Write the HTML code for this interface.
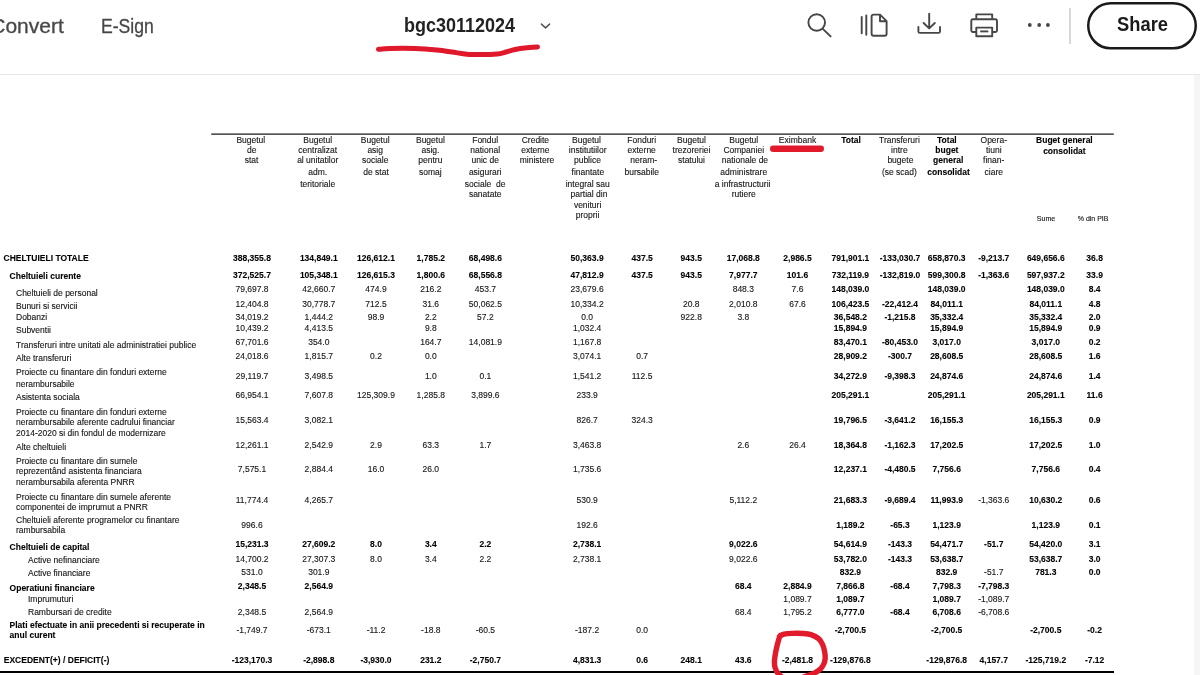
<!DOCTYPE html>
<html lang="ro">
<head>
<meta charset="utf-8">
<title>bgc30112024</title>
<style>
html,body{margin:0;padding:0;background:#fff;}
body{width:1200px;height:675px;overflow:hidden;position:relative;font-family:"Liberation Sans",Arial,Helvetica,sans-serif;}
#topbar{position:absolute;left:0;top:0;width:1200px;height:74px;background:#fff;border-bottom:1px solid #e6e6e6;box-sizing:content-box;}
#strip{position:absolute;left:1194px;top:75px;width:6px;height:600px;background:#f5f5f5;}
.nav{position:absolute;font-size:20.5px;line-height:24px;color:#464646;white-space:nowrap;-webkit-text-stroke:0.3px #464646;}
#convert{right:1136.3px;top:14px;transform:scaleX(1.025);transform-origin:100% 50%;}
#esign{left:101.1px;top:14px;transform:scaleX(0.858);transform-origin:0 50%;}
#title{position:absolute;left:404.2px;top:13.2px;font-size:20.5px;line-height:24px;font-weight:700;color:#222;white-space:nowrap;transform:scaleX(0.877);transform-origin:0 50%;}
#share{position:absolute;left:0;top:0;}
#share span{position:absolute;left:1116.5px;top:12.45px;font-size:20.8px;line-height:24px;font-weight:700;color:#1a1a1a;transform:scaleX(0.882);transform-origin:0 50%;white-space:nowrap;}
#vsep{position:absolute;left:1069px;top:8px;width:1.5px;height:36px;background:#d8d8d8;}
svg{position:absolute;left:0;top:0;overflow:visible;}
.t{position:absolute;font-size:8.5px;line-height:10px;color:#151515;white-space:nowrap;-webkit-text-stroke:0.12px #151515;}
.b{font-weight:700;color:#000;-webkit-text-stroke:0.1px #000;}
.hl{position:absolute;background:#1a1a1a;}
#tbl{position:absolute;left:0;top:0;width:1200px;height:675px;will-change:opacity;}
#topbar{will-change:opacity;}
</style>
</head>
<body>
<div id="topbar">
  <span class="nav" id="convert">Convert</span>
  <span class="nav" id="esign">E-Sign</span>
  <span id="title">bgc30112024</span>
  <div id="vsep"></div>
  <div id="share"><span>Share</span></div>
</div>
<div id="strip"></div>

<div class="hl" style="left:0;top:671.1px;width:1114px;height:2.2px;background:#000;"></div>
<div id="tbl">
<span class="t" style="top:135.15px;left:190.80px;width:120px;text-align:center;">Bugetul</span>
<span class="t" style="top:145.45px;left:191.80px;width:120px;text-align:center;">de</span>
<span class="t" style="top:155.35px;left:191.50px;width:120px;text-align:center;">stat</span>
<span class="t" style="top:135.15px;left:257.70px;width:120px;text-align:center;">Bugetul</span>
<span class="t" style="top:145.45px;left:257.70px;width:120px;text-align:center;">centralizat</span>
<span class="t" style="top:155.35px;left:257.70px;width:120px;text-align:center;">al unitatilor</span>
<span class="t" style="top:166.75px;left:257.70px;width:120px;text-align:center;">adm.</span>
<span class="t" style="top:179.15px;left:257.70px;width:120px;text-align:center;">teritoriale</span>
<span class="t" style="top:135.15px;left:315.20px;width:120px;text-align:center;">Bugetul</span>
<span class="t" style="top:145.45px;left:315.20px;width:120px;text-align:center;">asig</span>
<span class="t" style="top:155.35px;left:315.20px;width:120px;text-align:center;">sociale</span>
<span class="t" style="top:166.75px;left:316.00px;width:120px;text-align:center;">de stat</span>
<span class="t" style="top:135.15px;left:370.40px;width:120px;text-align:center;">Bugetul</span>
<span class="t" style="top:145.45px;left:370.40px;width:120px;text-align:center;">asig.</span>
<span class="t" style="top:155.35px;left:370.40px;width:120px;text-align:center;">pentru</span>
<span class="t" style="top:166.75px;left:370.40px;width:120px;text-align:center;">somaj</span>
<span class="t" style="top:135.15px;left:425.20px;width:120px;text-align:center;">Fondul</span>
<span class="t" style="top:145.45px;left:425.20px;width:120px;text-align:center;">national</span>
<span class="t" style="top:155.35px;left:425.20px;width:120px;text-align:center;">unic de</span>
<span class="t" style="top:166.75px;left:425.20px;width:120px;text-align:center;">asigurari</span>
<span class="t" style="top:179.15px;left:425.20px;width:120px;text-align:center;">sociale&nbsp; de</span>
<span class="t" style="top:189.45px;left:425.20px;width:120px;text-align:center;">sanatate</span>
<span class="t" style="top:135.15px;left:475.40px;width:120px;text-align:center;">Credite</span>
<span class="t" style="top:145.45px;left:475.40px;width:120px;text-align:center;">externe</span>
<span class="t" style="top:155.35px;left:477.00px;width:120px;text-align:center;">ministere</span>
<span class="t" style="top:135.15px;left:526.50px;width:120px;text-align:center;">Bugetul</span>
<span class="t" style="top:145.45px;left:527.70px;width:120px;text-align:center;">institutiilor</span>
<span class="t" style="top:155.35px;left:527.40px;width:120px;text-align:center;">publice</span>
<span class="t" style="top:166.75px;left:527.90px;width:120px;text-align:center;">finantate</span>
<span class="t" style="top:179.15px;left:527.70px;width:120px;text-align:center;">integral sau</span>
<span class="t" style="top:189.45px;left:529.00px;width:120px;text-align:center;">partial din</span>
<span class="t" style="top:199.85px;left:527.60px;width:120px;text-align:center;">venituri</span>
<span class="t" style="top:210.25px;left:527.50px;width:120px;text-align:center;">proprii</span>
<span class="t" style="top:135.15px;left:581.70px;width:120px;text-align:center;">Fonduri</span>
<span class="t" style="top:145.45px;left:581.70px;width:120px;text-align:center;">externe</span>
<span class="t" style="top:155.35px;left:583.70px;width:120px;text-align:center;">neram-</span>
<span class="t" style="top:166.75px;left:581.70px;width:120px;text-align:center;">bursabile</span>
<span class="t" style="top:135.15px;left:631.50px;width:120px;text-align:center;">Bugetul</span>
<span class="t" style="top:145.45px;left:631.50px;width:120px;text-align:center;">trezoreriei</span>
<span class="t" style="top:155.35px;left:631.50px;width:120px;text-align:center;">statului</span>
<span class="t" style="top:135.15px;left:683.75px;width:120px;text-align:center;">Bugetul</span>
<span class="t" style="top:145.45px;left:683.75px;width:120px;text-align:center;">Companiei</span>
<span class="t" style="top:155.35px;left:684.95px;width:120px;text-align:center;">nationale de</span>
<span class="t" style="top:166.75px;left:683.75px;width:120px;text-align:center;">administrare</span>
<span class="t" style="top:179.15px;left:682.55px;width:120px;text-align:center;">a infrastructurii</span>
<span class="t" style="top:189.45px;left:683.75px;width:120px;text-align:center;">rutiere</span>
<span class="t" style="top:135.15px;left:737.50px;width:120px;text-align:center;">Eximbank</span>
<span class="t b" style="top:135.15px;left:791.00px;width:120px;text-align:center;">Total</span>
<span class="t" style="top:135.15px;left:839.40px;width:120px;text-align:center;">Transferuri</span>
<span class="t" style="top:145.45px;left:839.40px;width:120px;text-align:center;">intre</span>
<span class="t" style="top:155.35px;left:840.40px;width:120px;text-align:center;">bugete</span>
<span class="t" style="top:166.75px;left:839.40px;width:120px;text-align:center;">(se scad)</span>
<span class="t b" style="top:135.15px;left:886.90px;width:120px;text-align:center;">Total</span>
<span class="t b" style="top:145.45px;left:886.90px;width:120px;text-align:center;">buget</span>
<span class="t b" style="top:155.35px;left:888.20px;width:120px;text-align:center;">general</span>
<span class="t b" style="top:166.75px;left:888.60px;width:120px;text-align:center;">consolidat</span>
<span class="t" style="top:135.15px;left:933.75px;width:120px;text-align:center;">Opera-</span>
<span class="t" style="top:145.45px;left:933.75px;width:120px;text-align:center;">tiuni</span>
<span class="t" style="top:155.35px;left:933.75px;width:120px;text-align:center;">finan-</span>
<span class="t" style="top:166.75px;left:933.75px;width:120px;text-align:center;">ciare</span>
<span class="t b" style="top:135.15px;left:1004.40px;width:120px;text-align:center;">Buget general</span>
<span class="t b" style="top:145.85px;left:1004.40px;width:120px;text-align:center;">consolidat</span>
<span class="t" style="top:214.14px;left:986.00px;width:120px;text-align:center;font-size:7.1px;">Sume</span>
<span class="t" style="top:214.17px;left:1033.10px;width:120px;text-align:center;font-size:7.0px;">% din PIB</span>
<span class="t b" style="top:253.05px;left:3.60px;">CHELTUIELI TOTALE</span>
<span class="t b" style="top:252.75px;left:192.00px;width:120px;text-align:center;">388,355.8</span>
<span class="t b" style="top:252.75px;left:258.80px;width:120px;text-align:center;">134,849.1</span>
<span class="t b" style="top:252.75px;left:316.00px;width:120px;text-align:center;">126,612.1</span>
<span class="t b" style="top:252.75px;left:370.80px;width:120px;text-align:center;">1,785.2</span>
<span class="t b" style="top:252.75px;left:425.40px;width:120px;text-align:center;">68,498.6</span>
<span class="t b" style="top:252.75px;left:527.10px;width:120px;text-align:center;">50,363.9</span>
<span class="t b" style="top:252.75px;left:582.10px;width:120px;text-align:center;">437.5</span>
<span class="t b" style="top:252.75px;left:631.25px;width:120px;text-align:center;">943.5</span>
<span class="t b" style="top:252.75px;left:683.30px;width:120px;text-align:center;">17,068.8</span>
<span class="t b" style="top:252.75px;left:737.50px;width:120px;text-align:center;">2,986.5</span>
<span class="t b" style="top:252.75px;left:790.40px;width:120px;text-align:center;">791,901.1</span>
<span class="t b" style="top:252.75px;left:840.00px;width:120px;text-align:center;">-133,030.7</span>
<span class="t b" style="top:252.75px;left:886.70px;width:120px;text-align:center;">658,870.3</span>
<span class="t b" style="top:252.75px;left:933.75px;width:120px;text-align:center;">-9,213.7</span>
<span class="t b" style="top:252.75px;left:985.80px;width:120px;text-align:center;">649,656.6</span>
<span class="t b" style="top:252.75px;left:1034.60px;width:120px;text-align:center;">36.8</span>
<span class="t b" style="top:271.05px;left:9.60px;">Cheltuieli curente</span>
<span class="t b" style="top:270.25px;left:192.00px;width:120px;text-align:center;">372,525.7</span>
<span class="t b" style="top:270.25px;left:258.80px;width:120px;text-align:center;">105,348.1</span>
<span class="t b" style="top:270.25px;left:316.00px;width:120px;text-align:center;">126,615.3</span>
<span class="t b" style="top:270.25px;left:370.80px;width:120px;text-align:center;">1,800.6</span>
<span class="t b" style="top:270.25px;left:425.40px;width:120px;text-align:center;">68,556.8</span>
<span class="t b" style="top:270.25px;left:527.10px;width:120px;text-align:center;">47,812.9</span>
<span class="t b" style="top:270.25px;left:582.10px;width:120px;text-align:center;">437.5</span>
<span class="t b" style="top:270.25px;left:631.25px;width:120px;text-align:center;">943.5</span>
<span class="t b" style="top:270.25px;left:683.30px;width:120px;text-align:center;">7,977.7</span>
<span class="t b" style="top:270.25px;left:737.50px;width:120px;text-align:center;">101.6</span>
<span class="t b" style="top:270.25px;left:790.40px;width:120px;text-align:center;">732,119.9</span>
<span class="t b" style="top:270.25px;left:840.00px;width:120px;text-align:center;">-132,819.0</span>
<span class="t b" style="top:270.25px;left:886.70px;width:120px;text-align:center;">599,300.8</span>
<span class="t b" style="top:270.25px;left:933.75px;width:120px;text-align:center;">-1,363.6</span>
<span class="t b" style="top:270.25px;left:985.80px;width:120px;text-align:center;">597,937.2</span>
<span class="t b" style="top:270.25px;left:1034.60px;width:120px;text-align:center;">33.9</span>
<span class="t" style="top:287.85px;left:16.00px;">Cheltuieli de personal</span>
<span class="t" style="top:284.15px;left:192.00px;width:120px;text-align:center;">79,697.8</span>
<span class="t" style="top:284.15px;left:258.80px;width:120px;text-align:center;">42,660.7</span>
<span class="t" style="top:284.15px;left:316.00px;width:120px;text-align:center;">474.9</span>
<span class="t" style="top:284.15px;left:370.80px;width:120px;text-align:center;">216.2</span>
<span class="t" style="top:284.15px;left:425.40px;width:120px;text-align:center;">453.7</span>
<span class="t" style="top:284.15px;left:527.10px;width:120px;text-align:center;">23,679.6</span>
<span class="t" style="top:284.15px;left:683.30px;width:120px;text-align:center;">848.3</span>
<span class="t" style="top:284.15px;left:737.50px;width:120px;text-align:center;">7.6</span>
<span class="t b" style="top:284.15px;left:790.40px;width:120px;text-align:center;">148,039.0</span>
<span class="t b" style="top:284.15px;left:886.70px;width:120px;text-align:center;">148,039.0</span>
<span class="t b" style="top:284.15px;left:985.80px;width:120px;text-align:center;">148,039.0</span>
<span class="t b" style="top:284.15px;left:1034.60px;width:120px;text-align:center;">8.4</span>
<span class="t" style="top:300.65px;left:16.00px;">Bunuri si servicii</span>
<span class="t" style="top:298.75px;left:192.00px;width:120px;text-align:center;">12,404.8</span>
<span class="t" style="top:298.75px;left:258.80px;width:120px;text-align:center;">30,778.7</span>
<span class="t" style="top:298.75px;left:316.00px;width:120px;text-align:center;">712.5</span>
<span class="t" style="top:298.75px;left:370.80px;width:120px;text-align:center;">31.6</span>
<span class="t" style="top:298.75px;left:425.40px;width:120px;text-align:center;">50,062.5</span>
<span class="t" style="top:298.75px;left:527.10px;width:120px;text-align:center;">10,334.2</span>
<span class="t" style="top:298.75px;left:631.25px;width:120px;text-align:center;">20.8</span>
<span class="t" style="top:298.75px;left:683.30px;width:120px;text-align:center;">2,010.8</span>
<span class="t" style="top:298.75px;left:737.50px;width:120px;text-align:center;">67.6</span>
<span class="t b" style="top:298.75px;left:790.40px;width:120px;text-align:center;">106,423.5</span>
<span class="t b" style="top:298.75px;left:840.00px;width:120px;text-align:center;">-22,412.4</span>
<span class="t b" style="top:298.75px;left:886.70px;width:120px;text-align:center;">84,011.1</span>
<span class="t b" style="top:298.75px;left:985.80px;width:120px;text-align:center;">84,011.1</span>
<span class="t b" style="top:298.75px;left:1034.60px;width:120px;text-align:center;">4.8</span>
<span class="t" style="top:311.65px;left:16.00px;">Dobanzi</span>
<span class="t" style="top:311.75px;left:192.00px;width:120px;text-align:center;">34,019.2</span>
<span class="t" style="top:311.75px;left:258.80px;width:120px;text-align:center;">1,444.2</span>
<span class="t" style="top:311.75px;left:316.00px;width:120px;text-align:center;">98.9</span>
<span class="t" style="top:311.75px;left:370.80px;width:120px;text-align:center;">2.2</span>
<span class="t" style="top:311.75px;left:425.40px;width:120px;text-align:center;">57.2</span>
<span class="t" style="top:311.75px;left:527.10px;width:120px;text-align:center;">0.0</span>
<span class="t" style="top:311.75px;left:631.25px;width:120px;text-align:center;">922.8</span>
<span class="t" style="top:311.75px;left:683.30px;width:120px;text-align:center;">3.8</span>
<span class="t b" style="top:311.75px;left:790.40px;width:120px;text-align:center;">36,548.2</span>
<span class="t b" style="top:311.75px;left:840.00px;width:120px;text-align:center;">-1,215.8</span>
<span class="t b" style="top:311.75px;left:886.70px;width:120px;text-align:center;">35,332.4</span>
<span class="t b" style="top:311.75px;left:985.80px;width:120px;text-align:center;">35,332.4</span>
<span class="t b" style="top:311.75px;left:1034.60px;width:120px;text-align:center;">2.0</span>
<span class="t" style="top:325.05px;left:16.00px;">Subventii</span>
<span class="t" style="top:322.55px;left:192.00px;width:120px;text-align:center;">10,439.2</span>
<span class="t" style="top:322.55px;left:258.80px;width:120px;text-align:center;">4,413.5</span>
<span class="t" style="top:322.55px;left:370.80px;width:120px;text-align:center;">9.8</span>
<span class="t" style="top:322.55px;left:527.10px;width:120px;text-align:center;">1,032.4</span>
<span class="t b" style="top:322.55px;left:790.40px;width:120px;text-align:center;">15,894.9</span>
<span class="t b" style="top:322.55px;left:886.70px;width:120px;text-align:center;">15,894.9</span>
<span class="t b" style="top:322.55px;left:985.80px;width:120px;text-align:center;">15,894.9</span>
<span class="t b" style="top:322.55px;left:1034.60px;width:120px;text-align:center;">0.9</span>
<span class="t" style="top:340.45px;left:16.00px;">Transferuri intre unitati ale administratiei publice</span>
<span class="t" style="top:337.10px;left:192.00px;width:120px;text-align:center;">67,701.6</span>
<span class="t" style="top:337.10px;left:258.80px;width:120px;text-align:center;">354.0</span>
<span class="t" style="top:337.10px;left:370.80px;width:120px;text-align:center;">164.7</span>
<span class="t" style="top:337.10px;left:425.40px;width:120px;text-align:center;">14,081.9</span>
<span class="t" style="top:337.10px;left:527.10px;width:120px;text-align:center;">1,167.8</span>
<span class="t b" style="top:337.10px;left:790.40px;width:120px;text-align:center;">83,470.1</span>
<span class="t b" style="top:337.10px;left:840.00px;width:120px;text-align:center;">-80,453.0</span>
<span class="t b" style="top:337.10px;left:886.70px;width:120px;text-align:center;">3,017.0</span>
<span class="t b" style="top:337.10px;left:985.80px;width:120px;text-align:center;">3,017.0</span>
<span class="t b" style="top:337.10px;left:1034.60px;width:120px;text-align:center;">0.2</span>
<span class="t" style="top:352.65px;left:16.00px;">Alte transferuri</span>
<span class="t" style="top:351.10px;left:192.00px;width:120px;text-align:center;">24,018.6</span>
<span class="t" style="top:351.10px;left:258.80px;width:120px;text-align:center;">1,815.7</span>
<span class="t" style="top:351.10px;left:316.00px;width:120px;text-align:center;">0.2</span>
<span class="t" style="top:351.10px;left:370.80px;width:120px;text-align:center;">0.0</span>
<span class="t" style="top:351.10px;left:527.10px;width:120px;text-align:center;">3,074.1</span>
<span class="t" style="top:351.10px;left:582.10px;width:120px;text-align:center;">0.7</span>
<span class="t b" style="top:351.10px;left:790.40px;width:120px;text-align:center;">28,909.2</span>
<span class="t b" style="top:351.10px;left:840.00px;width:120px;text-align:center;">-300.7</span>
<span class="t b" style="top:351.10px;left:886.70px;width:120px;text-align:center;">28,608.5</span>
<span class="t b" style="top:351.10px;left:985.80px;width:120px;text-align:center;">28,608.5</span>
<span class="t b" style="top:351.10px;left:1034.60px;width:120px;text-align:center;">1.6</span>
<span class="t" style="top:367.45px;left:16.00px;">Proiecte cu finantare din fonduri externe</span>
<span class="t" style="top:378.85px;left:16.00px;">nerambursabile</span>
<span class="t" style="top:370.80px;left:192.00px;width:120px;text-align:center;">29,119.7</span>
<span class="t" style="top:370.80px;left:258.80px;width:120px;text-align:center;">3,498.5</span>
<span class="t" style="top:370.80px;left:370.80px;width:120px;text-align:center;">1.0</span>
<span class="t" style="top:370.80px;left:425.40px;width:120px;text-align:center;">0.1</span>
<span class="t" style="top:370.80px;left:527.10px;width:120px;text-align:center;">1,541.2</span>
<span class="t" style="top:370.80px;left:582.10px;width:120px;text-align:center;">112.5</span>
<span class="t b" style="top:370.80px;left:790.40px;width:120px;text-align:center;">34,272.9</span>
<span class="t b" style="top:370.80px;left:840.00px;width:120px;text-align:center;">-9,398.3</span>
<span class="t b" style="top:370.80px;left:886.70px;width:120px;text-align:center;">24,874.6</span>
<span class="t b" style="top:370.80px;left:985.80px;width:120px;text-align:center;">24,874.6</span>
<span class="t b" style="top:370.80px;left:1034.60px;width:120px;text-align:center;">1.4</span>
<span class="t" style="top:391.55px;left:16.00px;">Asistenta sociala</span>
<span class="t" style="top:390.05px;left:192.00px;width:120px;text-align:center;">66,954.1</span>
<span class="t" style="top:390.05px;left:258.80px;width:120px;text-align:center;">7,607.8</span>
<span class="t" style="top:390.05px;left:316.00px;width:120px;text-align:center;">125,309.9</span>
<span class="t" style="top:390.05px;left:370.80px;width:120px;text-align:center;">1,285.8</span>
<span class="t" style="top:390.05px;left:425.40px;width:120px;text-align:center;">3,899.6</span>
<span class="t" style="top:390.05px;left:527.10px;width:120px;text-align:center;">233.9</span>
<span class="t b" style="top:390.05px;left:790.40px;width:120px;text-align:center;">205,291.1</span>
<span class="t b" style="top:390.05px;left:886.70px;width:120px;text-align:center;">205,291.1</span>
<span class="t b" style="top:390.05px;left:985.80px;width:120px;text-align:center;">205,291.1</span>
<span class="t b" style="top:390.05px;left:1034.60px;width:120px;text-align:center;">11.6</span>
<span class="t" style="top:407.45px;left:16.00px;">Proiecte cu finantare din fonduri externe</span>
<span class="t" style="top:416.95px;left:16.00px;">nerambursabile aferente cadrului financiar</span>
<span class="t" style="top:427.55px;left:16.00px;">2014-2020 si din fondul de modernizare</span>
<span class="t" style="top:415.05px;left:192.00px;width:120px;text-align:center;">15,563.4</span>
<span class="t" style="top:415.05px;left:258.80px;width:120px;text-align:center;">3,082.1</span>
<span class="t" style="top:415.05px;left:527.10px;width:120px;text-align:center;">826.7</span>
<span class="t" style="top:415.05px;left:582.10px;width:120px;text-align:center;">324.3</span>
<span class="t b" style="top:415.05px;left:790.40px;width:120px;text-align:center;">19,796.5</span>
<span class="t b" style="top:415.05px;left:840.00px;width:120px;text-align:center;">-3,641.2</span>
<span class="t b" style="top:415.05px;left:886.70px;width:120px;text-align:center;">16,155.3</span>
<span class="t b" style="top:415.05px;left:985.80px;width:120px;text-align:center;">16,155.3</span>
<span class="t b" style="top:415.05px;left:1034.60px;width:120px;text-align:center;">0.9</span>
<span class="t" style="top:441.55px;left:16.00px;">Alte cheltuieli</span>
<span class="t" style="top:440.05px;left:192.00px;width:120px;text-align:center;">12,261.1</span>
<span class="t" style="top:440.05px;left:258.80px;width:120px;text-align:center;">2,542.9</span>
<span class="t" style="top:440.05px;left:316.00px;width:120px;text-align:center;">2.9</span>
<span class="t" style="top:440.05px;left:370.80px;width:120px;text-align:center;">63.3</span>
<span class="t" style="top:440.05px;left:425.40px;width:120px;text-align:center;">1.7</span>
<span class="t" style="top:440.05px;left:527.10px;width:120px;text-align:center;">3,463.8</span>
<span class="t" style="top:440.05px;left:683.30px;width:120px;text-align:center;">2.6</span>
<span class="t" style="top:440.05px;left:737.50px;width:120px;text-align:center;">26.4</span>
<span class="t b" style="top:440.05px;left:790.40px;width:120px;text-align:center;">18,364.8</span>
<span class="t b" style="top:440.05px;left:840.00px;width:120px;text-align:center;">-1,162.3</span>
<span class="t b" style="top:440.05px;left:886.70px;width:120px;text-align:center;">17,202.5</span>
<span class="t b" style="top:440.05px;left:985.80px;width:120px;text-align:center;">17,202.5</span>
<span class="t b" style="top:440.05px;left:1034.60px;width:120px;text-align:center;">1.0</span>
<span class="t" style="top:456.25px;left:16.00px;">Proiecte cu finantare din sumele</span>
<span class="t" style="top:466.45px;left:16.00px;">reprezentând asistenta financiara</span>
<span class="t" style="top:477.45px;left:16.00px;">nerambursabila aferenta PNRR</span>
<span class="t" style="top:464.05px;left:192.00px;width:120px;text-align:center;">7,575.1</span>
<span class="t" style="top:464.05px;left:258.80px;width:120px;text-align:center;">2,884.4</span>
<span class="t" style="top:464.05px;left:316.00px;width:120px;text-align:center;">16.0</span>
<span class="t" style="top:464.05px;left:370.80px;width:120px;text-align:center;">26.0</span>
<span class="t" style="top:464.05px;left:527.10px;width:120px;text-align:center;">1,735.6</span>
<span class="t b" style="top:464.05px;left:790.40px;width:120px;text-align:center;">12,237.1</span>
<span class="t b" style="top:464.05px;left:840.00px;width:120px;text-align:center;">-4,480.5</span>
<span class="t b" style="top:464.05px;left:886.70px;width:120px;text-align:center;">7,756.6</span>
<span class="t b" style="top:464.05px;left:985.80px;width:120px;text-align:center;">7,756.6</span>
<span class="t b" style="top:464.05px;left:1034.60px;width:120px;text-align:center;">0.4</span>
<span class="t" style="top:491.55px;left:16.00px;">Proiecte cu finantare din sumele aferente</span>
<span class="t" style="top:501.55px;left:16.00px;">componentei de imprumut a PNRR</span>
<span class="t" style="top:494.55px;left:192.00px;width:120px;text-align:center;">11,774.4</span>
<span class="t" style="top:494.55px;left:258.80px;width:120px;text-align:center;">4,265.7</span>
<span class="t" style="top:494.55px;left:527.10px;width:120px;text-align:center;">530.9</span>
<span class="t" style="top:494.55px;left:683.30px;width:120px;text-align:center;">5,112.2</span>
<span class="t b" style="top:494.55px;left:790.40px;width:120px;text-align:center;">21,683.3</span>
<span class="t b" style="top:494.55px;left:840.00px;width:120px;text-align:center;">-9,689.4</span>
<span class="t b" style="top:494.55px;left:886.70px;width:120px;text-align:center;">11,993.9</span>
<span class="t" style="top:494.55px;left:933.75px;width:120px;text-align:center;">-1,363.6</span>
<span class="t b" style="top:494.55px;left:985.80px;width:120px;text-align:center;">10,630.2</span>
<span class="t b" style="top:494.55px;left:1034.60px;width:120px;text-align:center;">0.6</span>
<span class="t" style="top:514.55px;left:16.00px;">Cheltuieli aferente programelor cu finantare</span>
<span class="t" style="top:524.55px;left:16.00px;">rambursabila</span>
<span class="t" style="top:520.05px;left:192.00px;width:120px;text-align:center;">996.6</span>
<span class="t" style="top:520.05px;left:527.10px;width:120px;text-align:center;">192.6</span>
<span class="t b" style="top:520.05px;left:790.40px;width:120px;text-align:center;">1,189.2</span>
<span class="t b" style="top:520.05px;left:840.00px;width:120px;text-align:center;">-65.3</span>
<span class="t b" style="top:520.05px;left:886.70px;width:120px;text-align:center;">1,123.9</span>
<span class="t b" style="top:520.05px;left:985.80px;width:120px;text-align:center;">1,123.9</span>
<span class="t b" style="top:520.05px;left:1034.60px;width:120px;text-align:center;">0.1</span>
<span class="t b" style="top:541.65px;left:9.60px;">Cheltuieli de capital</span>
<span class="t b" style="top:539.35px;left:192.00px;width:120px;text-align:center;">15,231.3</span>
<span class="t b" style="top:539.35px;left:258.80px;width:120px;text-align:center;">27,609.2</span>
<span class="t b" style="top:539.35px;left:316.00px;width:120px;text-align:center;">8.0</span>
<span class="t b" style="top:539.35px;left:370.80px;width:120px;text-align:center;">3.4</span>
<span class="t b" style="top:539.35px;left:425.40px;width:120px;text-align:center;">2.2</span>
<span class="t b" style="top:539.35px;left:527.10px;width:120px;text-align:center;">2,738.1</span>
<span class="t b" style="top:539.35px;left:683.30px;width:120px;text-align:center;">9,022.6</span>
<span class="t b" style="top:539.35px;left:790.40px;width:120px;text-align:center;">54,614.9</span>
<span class="t b" style="top:539.35px;left:840.00px;width:120px;text-align:center;">-143.3</span>
<span class="t b" style="top:539.35px;left:886.70px;width:120px;text-align:center;">54,471.7</span>
<span class="t b" style="top:539.35px;left:933.75px;width:120px;text-align:center;">-51.7</span>
<span class="t b" style="top:539.35px;left:985.80px;width:120px;text-align:center;">54,420.0</span>
<span class="t b" style="top:539.35px;left:1034.60px;width:120px;text-align:center;">3.1</span>
<span class="t" style="top:554.55px;left:28.00px;">Active nefinanciare</span>
<span class="t" style="top:554.25px;left:192.00px;width:120px;text-align:center;">14,700.2</span>
<span class="t" style="top:554.25px;left:258.80px;width:120px;text-align:center;">27,307.3</span>
<span class="t" style="top:554.25px;left:316.00px;width:120px;text-align:center;">8.0</span>
<span class="t" style="top:554.25px;left:370.80px;width:120px;text-align:center;">3.4</span>
<span class="t" style="top:554.25px;left:425.40px;width:120px;text-align:center;">2.2</span>
<span class="t" style="top:554.25px;left:527.10px;width:120px;text-align:center;">2,738.1</span>
<span class="t" style="top:554.25px;left:683.30px;width:120px;text-align:center;">9,022.6</span>
<span class="t b" style="top:554.25px;left:790.40px;width:120px;text-align:center;">53,782.0</span>
<span class="t b" style="top:554.25px;left:840.00px;width:120px;text-align:center;">-143.3</span>
<span class="t b" style="top:554.25px;left:886.70px;width:120px;text-align:center;">53,638.7</span>
<span class="t b" style="top:554.25px;left:985.80px;width:120px;text-align:center;">53,638.7</span>
<span class="t b" style="top:554.25px;left:1034.60px;width:120px;text-align:center;">3.0</span>
<span class="t" style="top:567.55px;left:28.00px;">Active financiare</span>
<span class="t" style="top:567.35px;left:192.00px;width:120px;text-align:center;">531.0</span>
<span class="t" style="top:567.35px;left:258.80px;width:120px;text-align:center;">301.9</span>
<span class="t b" style="top:567.35px;left:790.40px;width:120px;text-align:center;">832.9</span>
<span class="t b" style="top:567.35px;left:886.70px;width:120px;text-align:center;">832.9</span>
<span class="t" style="top:567.35px;left:933.75px;width:120px;text-align:center;">-51.7</span>
<span class="t b" style="top:567.35px;left:985.80px;width:120px;text-align:center;">781.3</span>
<span class="t b" style="top:567.35px;left:1034.60px;width:120px;text-align:center;">0.0</span>
<span class="t b" style="top:582.80px;left:9.60px;">Operatiuni financiare</span>
<span class="t b" style="top:581.25px;left:192.00px;width:120px;text-align:center;">2,348.5</span>
<span class="t b" style="top:581.25px;left:258.80px;width:120px;text-align:center;">2,564.9</span>
<span class="t b" style="top:581.25px;left:683.30px;width:120px;text-align:center;">68.4</span>
<span class="t b" style="top:581.25px;left:737.50px;width:120px;text-align:center;">2,884.9</span>
<span class="t b" style="top:581.25px;left:790.40px;width:120px;text-align:center;">7,866.8</span>
<span class="t b" style="top:581.25px;left:840.00px;width:120px;text-align:center;">-68.4</span>
<span class="t b" style="top:581.25px;left:886.70px;width:120px;text-align:center;">7,798.3</span>
<span class="t b" style="top:581.25px;left:933.75px;width:120px;text-align:center;">-7,798.3</span>
<span class="t" style="top:593.80px;left:28.00px;">Imprumuturi</span>
<span class="t" style="top:593.95px;left:737.50px;width:120px;text-align:center;">1,089.7</span>
<span class="t b" style="top:593.95px;left:790.40px;width:120px;text-align:center;">1,089.7</span>
<span class="t b" style="top:593.95px;left:886.70px;width:120px;text-align:center;">1,089.7</span>
<span class="t" style="top:593.95px;left:933.75px;width:120px;text-align:center;">-1,089.7</span>
<span class="t" style="top:607.45px;left:28.00px;">Rambursari de credite</span>
<span class="t" style="top:606.65px;left:192.00px;width:120px;text-align:center;">2,348.5</span>
<span class="t" style="top:606.65px;left:258.80px;width:120px;text-align:center;">2,564.9</span>
<span class="t" style="top:606.65px;left:683.30px;width:120px;text-align:center;">68.4</span>
<span class="t" style="top:606.65px;left:737.50px;width:120px;text-align:center;">1,795.2</span>
<span class="t b" style="top:606.65px;left:790.40px;width:120px;text-align:center;">6,777.0</span>
<span class="t b" style="top:606.65px;left:840.00px;width:120px;text-align:center;">-68.4</span>
<span class="t b" style="top:606.65px;left:886.70px;width:120px;text-align:center;">6,708.6</span>
<span class="t" style="top:606.65px;left:933.75px;width:120px;text-align:center;">-6,708.6</span>
<span class="t b" style="top:619.55px;left:9.60px;">Plati efectuate in anii precedenti si recuperate in</span>
<span class="t b" style="top:629.55px;left:9.60px;">anul curent</span>
<span class="t" style="top:625.05px;left:192.00px;width:120px;text-align:center;">-1,749.7</span>
<span class="t" style="top:625.05px;left:258.80px;width:120px;text-align:center;">-673.1</span>
<span class="t" style="top:625.05px;left:316.00px;width:120px;text-align:center;">-11.2</span>
<span class="t" style="top:625.05px;left:370.80px;width:120px;text-align:center;">-18.8</span>
<span class="t" style="top:625.05px;left:425.40px;width:120px;text-align:center;">-60.5</span>
<span class="t" style="top:625.05px;left:527.10px;width:120px;text-align:center;">-187.2</span>
<span class="t" style="top:625.05px;left:582.10px;width:120px;text-align:center;">0.0</span>
<span class="t b" style="top:625.05px;left:790.40px;width:120px;text-align:center;">-2,700.5</span>
<span class="t b" style="top:625.05px;left:886.70px;width:120px;text-align:center;">-2,700.5</span>
<span class="t b" style="top:625.05px;left:985.80px;width:120px;text-align:center;">-2,700.5</span>
<span class="t b" style="top:625.05px;left:1034.60px;width:120px;text-align:center;">-0.2</span>
<span class="t b" style="top:655.35px;left:3.75px;">EXCEDENT(+) / DEFICIT(-)</span>
<span class="t b" style="top:655.25px;left:192.00px;width:120px;text-align:center;">-123,170.3</span>
<span class="t b" style="top:655.25px;left:258.80px;width:120px;text-align:center;">-2,898.8</span>
<span class="t b" style="top:655.25px;left:316.00px;width:120px;text-align:center;">-3,930.0</span>
<span class="t b" style="top:655.25px;left:370.80px;width:120px;text-align:center;">231.2</span>
<span class="t b" style="top:655.25px;left:425.40px;width:120px;text-align:center;">-2,750.7</span>
<span class="t b" style="top:655.25px;left:527.10px;width:120px;text-align:center;">4,831.3</span>
<span class="t b" style="top:655.25px;left:582.10px;width:120px;text-align:center;">0.6</span>
<span class="t b" style="top:655.25px;left:631.25px;width:120px;text-align:center;">248.1</span>
<span class="t b" style="top:655.25px;left:683.30px;width:120px;text-align:center;">43.6</span>
<span class="t b" style="top:655.25px;left:737.50px;width:120px;text-align:center;">-2,481.8</span>
<span class="t b" style="top:655.25px;left:790.40px;width:120px;text-align:center;">-129,876.8</span>
<span class="t b" style="top:655.25px;left:886.70px;width:120px;text-align:center;">-129,876.8</span>
<span class="t b" style="top:655.25px;left:933.75px;width:120px;text-align:center;">4,157.7</span>
<span class="t b" style="top:655.25px;left:985.80px;width:120px;text-align:center;">-125,719.2</span>
<span class="t b" style="top:655.25px;left:1034.60px;width:120px;text-align:center;">-7.12</span>
</div>
<svg width="1200" height="675" viewBox="0 0 1200 675" fill="none">
  <rect x="211.2" y="133.45" width="902.6" height="1.35" fill="#2a2a2a"/>
  <!-- chevron -->
  <path d="M541.4 24.1 L545.5 27.9 L549.6 24.1" stroke="#555" stroke-width="1.5" stroke-linecap="round" stroke-linejoin="round"/>
  <!-- search -->
  <circle cx="816.7" cy="22.5" r="8.3" stroke="#464646" stroke-width="1.9"/>
  <path d="M822.8 28.9 L830.6 36.4" stroke="#464646" stroke-width="1.9" stroke-linecap="round"/>
  <!-- pages -->
  <path d="M861.7 17 V33.2 M866.3 15.5 V34.8" stroke="#464646" stroke-width="1.9" stroke-linecap="round"/>
  <path d="M880 14.6 H873.6 a2 2 0 0 0 -2 2 V33.8 a2 2 0 0 0 2 2 H884.6 a2 2 0 0 0 2 -2 V21.2 Z M880 14.6 V21.2 H886.6" stroke="#464646" stroke-width="1.9" stroke-linejoin="round"/>
  <!-- download -->
  <path d="M929.2 13.8 V28 M923.6 23 L929.2 28.4 L934.8 23" stroke="#464646" stroke-width="1.9" stroke-linecap="round" stroke-linejoin="round"/>
  <path d="M918.4 27 V31.4 a1.5 1.5 0 0 0 1.5 1.5 H938.5 a1.5 1.5 0 0 0 1.5 -1.5 V27" stroke="#464646" stroke-width="1.9" stroke-linecap="round"/>
  <!-- printer -->
  <path d="M976.3 18.8 V14.4 H992.2 V18.8" stroke="#464646" stroke-width="1.9" stroke-linejoin="round"/>
  <path d="M976.3 32 H972.8 a1.5 1.5 0 0 1 -1.5 -1.5 V20.7 a1.5 1.5 0 0 1 1.5 -1.5 H995.5 a1.5 1.5 0 0 1 1.5 1.5 V30.5 a1.5 1.5 0 0 1 -1.5 1.5 H992.2" stroke="#464646" stroke-width="1.9"/>
  <rect x="976.3" y="27.6" width="15.9" height="8.6" stroke="#464646" stroke-width="1.9" stroke-linejoin="round"/>
  <path d="M980.2 31.4 H988.3" stroke="#464646" stroke-width="1.9"/>
  <rect x="1088.25" y="3.25" width="107.5" height="45.1" rx="22.55" stroke="#1a1a1a" stroke-width="2.5"/>
  <!-- dots -->
  <circle cx="1029.8" cy="25" r="1.9" fill="#464646"/><circle cx="1039.2" cy="25" r="1.9" fill="#464646"/><circle cx="1047.9" cy="25" r="1.9" fill="#464646"/>
  <!-- red marks -->
  <path d="M378.5 49.3 C380.4 49.1 383.9 48.5 390.0 48.4 C396.1 48.2 407.2 48.1 415.0 48.4 C422.8 48.7 430.8 49.4 437.0 50.0 C443.2 50.6 447.0 51.3 452.0 52.0 C457.0 52.7 462.0 53.8 467.0 54.2 C472.0 54.6 477.0 54.6 482.0 54.6 C487.0 54.6 493.0 54.4 497.0 54.0 C501.0 53.6 503.0 52.8 506.0 52.0 C509.0 51.2 511.5 50.2 515.0 49.5 C518.5 48.8 523.2 48.2 527.0 47.8 C530.8 47.4 535.8 47.0 537.5 46.9" stroke="#e0182b" stroke-width="5" stroke-linecap="round"/>
  <path d="M773.2 148.8 H820.8" stroke="#e21b2c" stroke-width="6.4" stroke-linecap="round"/>
  <path d="M780.2 635.5 C779.9 636.2 779.1 638.2 778.6 640.0 C778.1 641.8 777.6 643.5 777.0 646.0 C776.4 648.5 775.6 652.3 775.2 655.0 C774.8 657.7 774.4 659.8 774.4 662.0 C774.4 664.2 774.6 666.1 775.2 668.0 C775.8 669.9 776.7 671.8 778.0 673.5 C779.3 675.2 782.2 677.2 783.0 678.0 M795.0 680.0 C796.7 679.4 802.0 677.5 805.0 676.5 C808.0 675.5 810.4 675.0 813.0 673.8 C815.6 672.5 818.7 670.7 820.5 669.0 C822.3 667.3 823.2 665.3 824.0 663.5 C824.8 661.7 825.1 659.9 825.2 658.0 C825.3 656.1 825.1 654.2 824.7 652.0 C824.3 649.8 823.6 646.7 822.6 644.5 C821.6 642.3 820.5 640.2 818.6 638.6 C816.7 637.0 813.6 635.5 811.0 634.6 C808.4 633.8 806.2 633.7 803.0 633.5 C799.8 633.3 795.2 633.3 792.0 633.4 C788.8 633.5 786.1 633.7 784.0 634.2 C781.9 634.7 780.2 636.2 779.5 636.6" stroke="#e21b2c" stroke-width="5.4" stroke-linecap="round" stroke-linejoin="round"/>
</svg>
</body>
</html>
